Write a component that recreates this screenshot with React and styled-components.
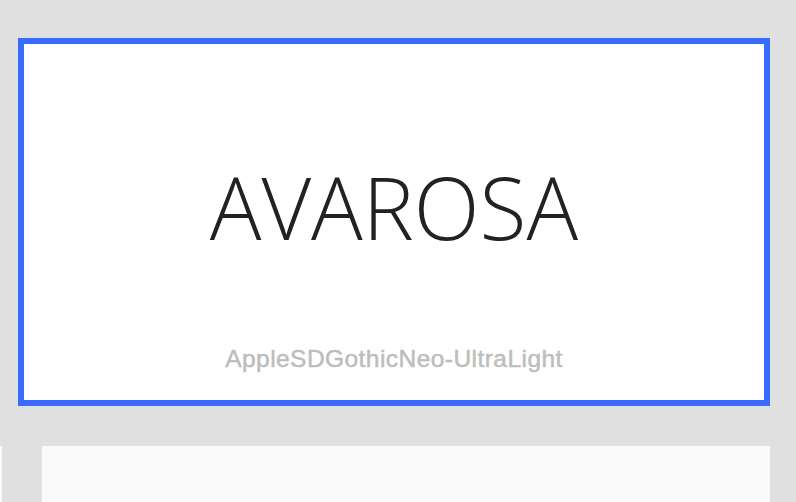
import React from "react";
import styled, { createGlobalStyle } from "styled-components";

const Global = createGlobalStyle`
  html, body { margin: 0; padding: 0; background: #e0e0e0; }
  body { font-family: "Liberation Sans", Arial, sans-serif; overflow: hidden; }
`;

const Page = styled.div`
  display: flex;
  flex-direction: column;
  gap: 40px;
  padding: 38px 26px 0 18px;
  height: 502px;
  box-sizing: border-box;
  overflow: hidden;
`;

const Card = styled.div`
  box-sizing: border-box;
  height: 368px;
  border: 6px solid #386bff;
  background: #ffffff;
  display: flex;
  flex-direction: column;
  align-items: center;
  padding: 120px 0 29px;
`;

const Title = styled.div`
  font-family: "Open Sans", sans-serif;
  font-weight: 300;
  font-size: 86px;
  line-height: 1;
  color: #222222;
`;

const Caption = styled.div`
  margin-top: auto;
  font-family: "Liberation Sans", Arial, sans-serif;
  font-weight: 400;
  font-size: 24.5px;
  letter-spacing: 0.45px;
  line-height: 1;
  color: #bdbdbd;
  -webkit-text-stroke: 0.5px #bdbdbd;
`;

const Row = styled.div`
  display: flex;
  margin-left: -18px;
  flex: 1;
`;

const Sliver = styled.div`
  width: 2px;
  background: #fafafa;
  margin-right: 40px;
`;

const NextCard = styled.div`
  flex: 1;
  background: #fafafa;
`;

export default function App() {
  return (
    <>
      <Global />
      <Page>
        <Card>
          <Title>AVAROSA</Title>
          <Caption>AppleSDGothicNeo-UltraLight</Caption>
        </Card>
        <Row>
          <Sliver />
          <NextCard />
        </Row>
      </Page>
    </>
  );
}
